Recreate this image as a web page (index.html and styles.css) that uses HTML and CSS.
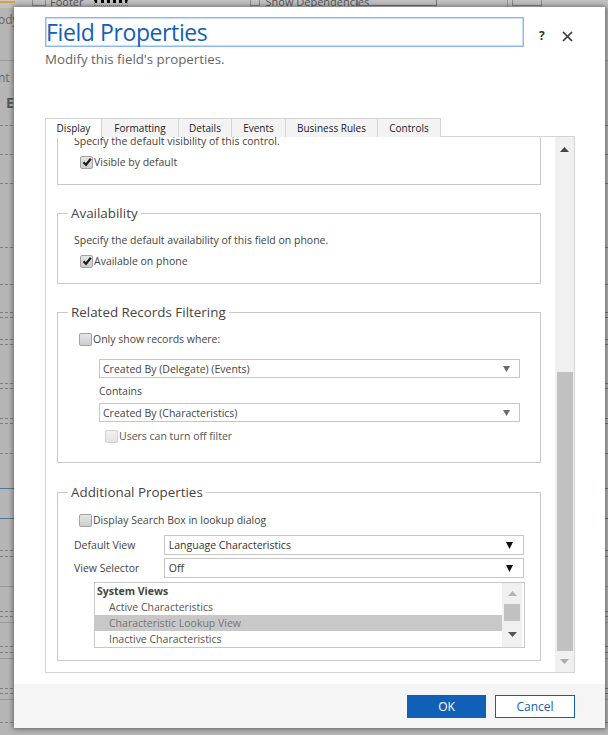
FILE: index.html
```html
<!DOCTYPE html>
<html>
<head>
<meta charset="utf-8">
<title>Field Properties</title>
<link rel="stylesheet" href="styles.css">
</head>
<body>
<div class="page">
  <div class="ribbon">
    <span class="rb-sel"></span>
    <span class="rb-ico rb-a"></span>
    <span class="rb-txt">Footer</span>
    <span class="rb-ico rb-b"></span>
    <span class="rb-ico rb-c"></span>
    <span class="rb-txt rb-dep">Show Dependencies</span>
    <span class="rb-ico rb-d"></span>
    <span class="rb-sep"></span>
    <span class="rb-ico rb-e"></span>
  </div>
  <div class="bg-top"><span class="bg-word">ody</span></div>
  <div class="bg-mid"><span class="bg-word">nt</span><span class="bg-bold">E</span></div>
  <div class="ln d h29"></div>
  <div class="ln d h29"></div>
  <div class="ln d h64"></div>
  <div class="ln d h37"></div>
  <div class="ln d h28"></div>
  <div class="ln d h5"></div>
  <div class="ln d h22"></div>
  <div class="ln d h5"></div>
  <div class="ln d h39"></div>
  <div class="ln d h5"></div>
  <div class="ln d h30"></div>
  <div class="ln d h5"></div>
  <div class="ln d h30"></div>
  <div class="ln d h35"></div>
  <div class="ln b h30"></div>
  <div class="ln b h32"></div>
  <div class="ln d h6"></div>
  <div class="ln d h30"></div>
  <div class="ln s h25"></div>
  <div class="ln d h5"></div>
  <div class="ln d h6"></div>
  <div class="ln s h24"></div>
  <div class="ln d h6"></div>
  <div class="ln d h6"></div>
  <div class="ln s h30"></div>
  <div class="ln d h5"></div>
  <div class="ln d h6"></div>
  <div class="ln s h23"></div>
  <div class="ln d h5"></div>
</div>

<div class="dialog">
  <div class="dlg-head">
    <div class="title-row">
      <div class="title-input">Field Properties</div>
      <span class="help">?</span>
      <span class="close"><svg width="11" height="11" viewBox="0 0 11 11"><path d="M1 1 L10 10 M10 1 L1 10" stroke="#3a3a3a" stroke-width="1.7" fill="none"/></svg></span>
    </div>
    <div class="subtitle">Modify this field's properties.</div>
  </div>

  <div class="tabs">
    <div class="tab active w1">Display</div>
    <div class="tab w2">Formatting</div>
    <div class="tab w3">Details</div>
    <div class="tab w4">Events</div>
    <div class="tab w5">Business Rules</div>
    <div class="tab w6">Controls</div>
  </div>

  <div class="panel">
    <div class="content">
      <div class="fs-cut">
        <div class="fs-body">
          <div class="txt">Specify the default visibility of this control.</div>
          <div class="cb-row ml6">
            <span class="cb checked"><svg width="10" height="10" viewBox="0 0 10 10"><path d="M1.5 5.2 L4 7.8 L8.8 1.8" stroke="#1e1e1e" stroke-width="2.2" fill="none"/></svg></span>
            <span class="cb-label">Visible by default</span>
          </div>
        </div>
      </div>

      <fieldset class="fs">
        <legend>Availability</legend>
        <div class="fs-body">
          <div class="txt">Specify the default availability of this field on phone.</div>
          <div class="cb-row ml6">
            <span class="cb checked"><svg width="10" height="10" viewBox="0 0 10 10"><path d="M1.5 5.2 L4 7.8 L8.8 1.8" stroke="#1e1e1e" stroke-width="2.2" fill="none"/></svg></span>
            <span class="cb-label">Available on phone</span>
          </div>
        </div>
      </fieldset>

      <fieldset class="fs mb20">
        <legend>Related Records Filtering</legend>
        <div class="fs-body pb18">
          <div class="cb-row ml5">
            <span class="cb"></span>
            <span class="cb-label">Only show records where:</span>
          </div>
          <div class="sel sel-rel mt12">
            <span>Created By (Delegate) (Events)</span>
            <svg class="arr" width="7" height="6" viewBox="0 0 7 6"><path d="M0 0 H7 L3.5 6 Z" fill="#6a6a6a"/></svg>
          </div>
          <div class="txt ml25 mt5">Contains</div>
          <div class="sel sel-rel mt4">
            <span>Created By (Characteristics)</span>
            <svg class="arr" width="7" height="6" viewBox="0 0 7 6"><path d="M0 0 H7 L3.5 6 Z" fill="#6a6a6a"/></svg>
          </div>
          <div class="cb-row ml31 mt6 disabled">
            <span class="cb"></span>
            <span class="cb-label">Users can turn off filter</span>
          </div>
        </div>
      </fieldset>

      <fieldset class="fs">
        <legend>Additional Properties</legend>
        <div class="fs-body pt11 pb12">
          <div class="cb-row ml5">
            <span class="cb"></span>
            <span class="cb-label">Display Search Box in lookup dialog</span>
          </div>
          <div class="prop-row mt7">
            <span class="prop-label">Default View</span>
            <div class="sel sel-add">
              <span>Language Characteristics</span>
              <svg class="arr" width="7" height="7" viewBox="0 0 7 7"><path d="M0 0 H7 L3.5 7 Z" fill="#111"/></svg>
            </div>
          </div>
          <div class="prop-row mt3">
            <span class="prop-label">View Selector</span>
            <div class="sel sel-add">
              <span>Off</span>
              <svg class="arr" width="7" height="7" viewBox="0 0 7 7"><path d="M0 0 H7 L3.5 7 Z" fill="#111"/></svg>
            </div>
          </div>
          <div class="lb">
            <div class="lb-items">
              <div class="lb-head">System Views</div>
              <div class="lb-item">Active Characteristics</div>
              <div class="lb-item lb-selected">Characteristic Lookup View</div>
              <div class="lb-item">Inactive Characteristics</div>
            </div>
            <div class="lb-sb">
              <div class="lb-up"><svg width="9" height="5" viewBox="0 0 9 5"><path d="M0 5 L4.5 0 L9 5 Z" fill="#b4b4b4"/></svg></div>
              <div class="lb-thumb"></div>
              <div class="lb-down"><svg width="9" height="5" viewBox="0 0 9 5"><path d="M0 0 L4.5 5 L9 0 Z" fill="#555"/></svg></div>
            </div>
          </div>
        </div>
      </fieldset>
    </div>
    <div class="vscroll">
      <div class="vs-up"><svg width="9" height="5" viewBox="0 0 9 5"><path d="M0 5 L4.5 0 L9 5 Z" fill="#444"/></svg></div>
      <div class="vs-track"></div>
      <div class="vs-thumb"></div>
      <div class="vs-down"><svg width="9" height="5" viewBox="0 0 9 5"><path d="M0 0 L4.5 5 L9 0 Z" fill="#ababab"/></svg></div>
    </div>
  </div>

  <div class="footer">
    <button class="btn ok">OK</button>
    <button class="btn cancel">Cancel</button>
  </div>
</div>
</body>
</html>
```
FILE: styles.css
```css
* { box-sizing: border-box; }
html, body { margin: 0; padding: 0; }
body {
  width: 608px;
  height: 735px;
  overflow: hidden;
  position: relative;
  background: #b5b5b5;
  font-family: "Open Sans", "Noto Sans", sans-serif;
}

/* ---------- backdrop page ---------- */
.page { width: 608px; height: 735px; }
.ribbon {
  height: 8px;
  display: flex;
  align-items: flex-start;
  background: #c2c2c2;
  overflow: hidden;
}
.rb-sel { width: 15px; height: 3px; border-bottom: 2px solid #d6a24c; background: #cfcac0; }
.rb-ico { height: 6px; border: 1px solid #8a8a8a; border-top: none; }
.rb-a { width: 14px; margin-left: 17px; }
.rb-b { width: 34px; margin-left: 10px; border-style: dotted; }
.rb-c { width: 10px; margin-left: 122px; }
.rb-txt { font-size: 11px; line-height: 11px; color: #555; margin-top: -4px; margin-left: 4px; }
.rb-dep { margin-left: 6px; }
.rb-d { width: 80px; margin-left: -12px; border-color: #777; }
.rb-sep { width: 1px; height: 8px; background: #999; margin-left: 70px; }
.rb-e { width: 30px; margin-left: 4px; }

.bg-top { height: 53px; padding-top: 5px; border-bottom: 1px solid #9c9c9c; }
.bg-word { font-size: 12px; line-height: 14px; color: #666; margin-left: -2px; display: block; }
.bg-mid { height: 64px; padding-top: 10px; }
.bg-bold { display: block; font-size: 14px; font-weight: 700; color: #555; margin-left: 6px; margin-top: 10px; line-height: 16px; }
.ln { width: 608px; }
.ln.d { border-top: 1px dashed #7e7e7e; }
.ln.s { border-top: 1px solid #9a9a9a; }
.ln.b { border-top: 1px solid #4f7a92; }
.h5 { height: 5px; } .h6 { height: 6px; } .h22 { height: 22px; } .h23 { height: 23px; }
.h24 { height: 24px; } .h25 { height: 25px; } .h28 { height: 28px; } .h29 { height: 29px; }
.h30 { height: 30px; } .h32 { height: 32px; } .h35 { height: 35px; } .h37 { height: 37px; }
.h39 { height: 39px; } .h64 { height: 64px; }

/* ---------- dialog ---------- */
.dialog {
  position: absolute;
  left: 14px;
  top: 7px;
  width: 591px;
  height: 721px;
  background: #fff;
  box-shadow: 0 0 5px 1px rgba(0, 0, 0, 0.45);
  display: flex;
  flex-direction: column;
}
.dlg-head { padding: 10px 0 0 31px; }
.title-row { display: flex; align-items: flex-start; height: 30px; }
.title-input {
  width: 479px;
  height: 30px;
  border: 1px solid #8cb8ef;
  box-shadow: inset 0 0 0 1px #c6dcf7;
  font-size: 23px;
  letter-spacing: -0.4px;
  line-height: 28px;
  color: #1160b7;
  padding-left: 0;
  white-space: nowrap;
}
.help {
  margin-left: 15px;
  margin-top: 12px;
  font-size: 12px;
  line-height: 14px;
  font-weight: 700;
  color: #333;
  width: 10px;
}
.close { margin-left: 13px; margin-top: 14px; display: flex; }
.subtitle {
  margin-top: 3px;
  font-size: 13.3px;
  line-height: 18px;
  color: #666;
}

/* tabs */
.tabs {
  margin: 50px 0 0 31px;
  display: flex;
  height: 19px;
  position: relative;
  z-index: 1;
  margin-bottom: -1px;
}
.tab {
  height: 19px;
  border: 1px solid #d4d4d4;
  border-bottom: none;
  margin-right: -1px;
  background: #f3f3f3;
  font-size: 10px;
  line-height: 17px;
  padding-top: 1px;
  text-align: center;
  color: #222;
}
.tab.active { background: #fff; height: 20px; }
.w1 { width: 57px; } .w2 { width: 78px; } .w3 { width: 54px; }
.w4 { width: 55px; } .w5 { width: 93px; } .w6 { width: 64px; }

/* panel */
.panel {
  margin-left: 31px;
  width: 530px;
  height: 537px;
  border: 1px solid #d4d4d4;
  display: flex;
}
.content {
  width: 509px;
  height: 535px;
  overflow: hidden;
  padding-left: 11px;
}
.vscroll {
  width: 19px;
  height: 535px;
  background: #f0f0f0;
  display: flex;
  flex-direction: column;
  align-items: center;
}
.vs-up { height: 24px; display: flex; align-items: center; justify-content: center; }
.vs-track { flex: 1; }
.vs-thumb { width: 16px; height: 279px; background: #c1c1c1; }
.vs-down { height: 21px; display: flex; align-items: center; justify-content: center; }

/* fieldsets */
.fs-cut {
  width: 484px;
  border: 1px solid #c9c9c9;
  border-top: none;
  margin: -14px 0 19px 0;
}
.fs {
  width: 484px;
  border: 1px solid #c9c9c9;
  margin: 0 0 19px 0;
  padding: 0;
  min-width: 0;
}
.fs.mb20 { margin-bottom: 20px; }
.fs legend {
  margin-left: 10px;
  padding: 0 3px;
  font-size: 13.4px;
  line-height: 18px;
  color: #444;
}
.fs-body { padding: 10px 16px 14px 16px; }
.pb18 { padding-bottom: 18px; }
.pt11 { padding-top: 11px; }
.pb12 { padding-bottom: 12px; }

.txt { font-size: 10.5px; line-height: 16px; color: #444; white-space: nowrap; }
.cb-row { display: flex; align-items: center; height: 16px; margin-top: 5px; }
.cb-row:first-child { margin-top: 0; }
.ml5 { margin-left: 5px; } .ml6 { margin-left: 6px; }
.ml25 { margin-left: 25px; } .ml31 { margin-left: 31px; }
.mt3 { margin-top: 3px; } .mt4 { margin-top: 4px; } .cb-row.mt6, .mt6 { margin-top: 6px; }
.mt5 { margin-top: 5px; } .mt7 { margin-top: 7px; } .mt12 { margin-top: 12px; }
.cb {
  width: 13px;
  height: 13px;
  border: 1px solid #a2a2a2;
  border-radius: 2px;
  background: linear-gradient(#e6e6e6, #cdcdcd);
  display: flex;
  align-items: center;
  justify-content: center;
}
.cb-label { margin-left: 1px; font-size: 10.5px; line-height: 16px; color: #444; white-space: nowrap; }
.disabled .cb { border-color: #cfcfcf; background: linear-gradient(#f1f1f1, #e3e3e3); }
.disabled .cb-label { color: #555; }

.sel {
  height: 19px;
  border: 1px solid #c6c6c6;
  display: flex;
  align-items: center;
  justify-content: space-between;
  font-size: 10.5px;
  color: #444;
  white-space: nowrap;
  background: #fff;
}
.sel-rel { width: 421px; margin-left: 25px; padding: 0 9px 0 3px; }
.sel-add { width: 361px; height: 20px; padding: 0 10px 0 4px; color: #333; }

.prop-row { display: flex; align-items: center; height: 20px; }
.prop-label { width: 90px; font-size: 10.5px; color: #444; white-space: nowrap; }

.lb {
  margin: 4px 0 0 20px;
  width: 431px;
  height: 66px;
  border: 1px solid #c8c8c8;
  display: flex;
}
.lb-items { width: 407px; }
.lb-head { font-size: 10.5px; line-height: 16px; font-weight: 700; color: #444; padding-left: 2px; }
.lb-item { font-size: 10.5px; line-height: 16px; color: #555; padding-left: 14px; white-space: nowrap; }
.lb-selected { background: #c8c8c8; color: #777; }
.lb-sb {
  width: 20px;
  margin-right: 2px;
  background: #f0f0f0;
  display: flex;
  flex-direction: column;
  align-items: center;
}
.lb-up { height: 20px; display: flex; align-items: center; justify-content: center; }
.lb-thumb { width: 16px; height: 17px; margin-top: 1px; background: #c1c1c1; }
.lb-down { flex: 1; display: flex; align-items: center; justify-content: center; }

/* footer */
.footer {
  margin-top: auto;
  height: 44px;
  background: #f5f5f5;
  display: flex;
  justify-content: flex-end;
  align-items: flex-start;
  padding: 11px 30px 0 0;
  gap: 9px;
}
.btn {
  height: 23px;
  border: 1px solid #1160b7;
  font-family: "Open Sans", "Noto Sans", sans-serif;
  font-size: 12px;
  padding: 0;
  cursor: pointer;
}
.btn.ok { width: 79px; background: #1160b7; color: #fff; }
.btn.cancel { width: 80px; background: #fff; color: #1160b7; }
```
